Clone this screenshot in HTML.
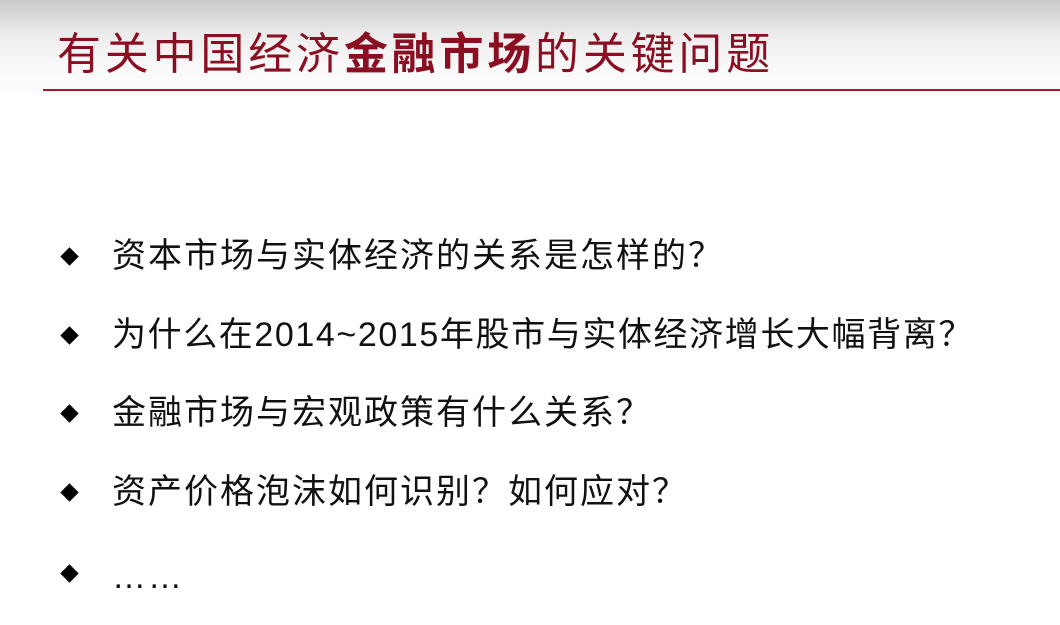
<!DOCTYPE html>
<html><head><meta charset="utf-8"><style>
body{margin:0;width:1060px;height:625px;overflow:hidden;background:#fff;font-family:"Liberation Sans","Noto Sans CJK SC",sans-serif;position:relative}
.bg{position:absolute;left:0;top:0;width:1060px;height:100px;background:linear-gradient(#c9c9c9,#ececec 35%,#fafafa 70%,#fff)}
.t{position:absolute;left:57px;top:18px;font-size:44px;color:#8a0f22;white-space:nowrap;letter-spacing:3.8px}
.line{position:absolute;left:43px;top:89px;width:1017px;height:2px;background:#a01a2a}
.b{position:absolute;left:112px;font-size:34px;color:#111;white-space:nowrap;line-height:40px;letter-spacing:2px}
.d{position:absolute;left:63px;width:13px;height:13px;background:#000;transform:rotate(45deg)}
</style></head><body>
<div class="bg"></div>
<div class="t">有关中国经济<span style="font-weight:bold">金融市场</span>的关键问题</div>
<div class="line"></div>
<div class="d" style="top:250px"></div><div class="b" style="top:236px">资本市场与实体经济的关系是怎样的？</div>
<div class="d" style="top:329px"></div><div class="b" style="top:315px;letter-spacing:1.6px">为什么在2014~2015年股市与实体经济增长大幅背离？</div>
<div class="d" style="top:407px"></div><div class="b" style="top:393px">金融市场与宏观政策有什么关系？</div>
<div class="d" style="top:486px"></div><div class="b" style="top:472px">资产价格泡沫如何识别？如何应对？</div>
<div class="d" style="top:567px"></div><div class="b" style="top:557px">……</div>
</body></html>
